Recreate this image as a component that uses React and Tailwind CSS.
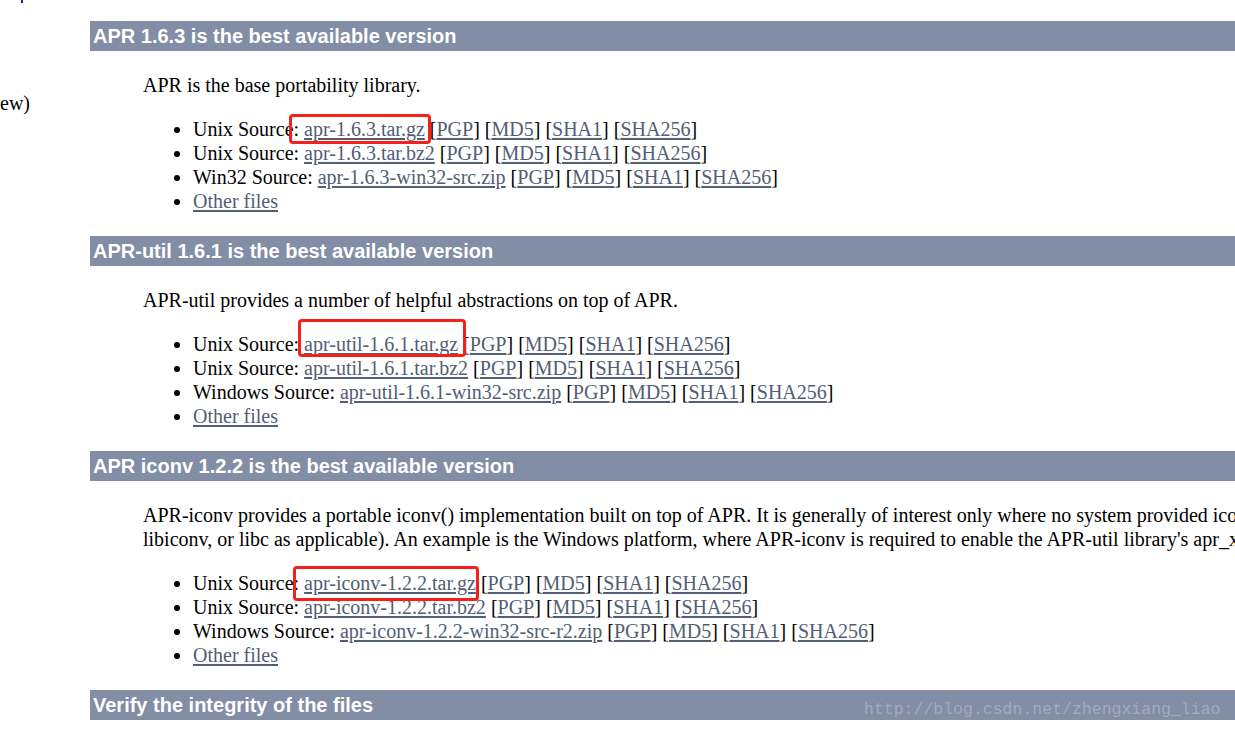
const sections = [
    {
        title: 'APR 1.6.3 is the best available version',
        text: ['APR is the base portability library.'],
        files: [
            ['Unix Source', 'apr-1.6.3.tar.gz'],
            ['Unix Source', 'apr-1.6.3.tar.bz2'],
            ['Win32 Source', 'apr-1.6.3-win32-src.zip'],
        ],
    },
    {
        title: 'APR-util 1.6.1 is the best available version',
        text: ['APR-util provides a number of helpful abstractions on top of APR.'],
        files: [
            ['Unix Source', 'apr-util-1.6.1.tar.gz'],
            ['Unix Source', 'apr-util-1.6.1.tar.bz2'],
            ['Windows Source', 'apr-util-1.6.1-win32-src.zip'],
        ],
    },
    {
        title: 'APR iconv 1.2.2 is the best available version',
        text: [
            'APR-iconv provides a portable iconv() implementation built on top of APR. It is generally of interest only where no system provided iconv implementation is available (APR-util can also build against GNU',
            "libiconv, or libc as applicable). An example is the Windows platform, where APR-iconv is required to enable the APR-util library's apr_xlate (translation) features.",
        ],
        files: [
            ['Unix Source', 'apr-iconv-1.2.2.tar.gz'],
            ['Unix Source', 'apr-iconv-1.2.2.tar.bz2'],
            ['Windows Source', 'apr-iconv-1.2.2-win32-src-r2.zip'],
        ],
    },
];

const Link = ({ children }) => (
    <a href="#" className="text-[#525D76] underline underline-offset-[2px]">
        {children}
    </a>
);

const Heading = ({ children, className = '' }) => (
    <h1
        className={`h-[30px] bg-[#828DA6] pl-[3px] text-[20px] font-bold leading-[30px] text-white ${className}`}
        style={{ fontFamily: '"Liberation Sans", Arial, sans-serif' }}
    >
        {children}
    </h1>
);

const Section = ({ section, first }) => (
    <div className={first ? '' : 'mt-[23px]'}>
        <Heading>{section.title}</Heading>
        <p className="mt-[22px] whitespace-nowrap pl-[53px]">
            {section.text.map((line, i) => (
                <span key={i}>
                    {line}
                    {i < section.text.length - 1 && <br />}
                </span>
            ))}
        </p>
        <ul className="mt-[20px] list-disc whitespace-nowrap pl-[103px]">
            {section.files.map(([label, file]) => (
                <li key={file}>
                    {label}: <Link>{file}</Link> [<Link>PGP</Link>] [<Link>MD5</Link>] [
                    <Link>SHA1</Link>] [<Link>SHA256</Link>]
                </li>
            ))}
            <li>
                <Link>Other files</Link>
            </li>
        </ul>
    </div>
);

const App = () => {
    return (
        <div
            className="relative h-[731px] w-[1235px] overflow-hidden bg-white text-[20px] leading-[24px] text-black"
            style={{ fontFamily: '"Liberation Serif", "Times New Roman", serif' }}
        >
            <div className="flex">
                {/* cut-off left sidebar */}
                <div className="w-[90px] shrink-0">
                    <div className="ml-[21px] h-[3px] w-[2px] bg-[#2020c0]" />
                    <div className="mt-[88px]">ew)</div>
                </div>
                <div className="w-[1500px] shrink-0 pt-[21px]">
                    {sections.map((s, i) => (
                        <Section key={s.title} section={s} first={i === 0} />
                    ))}
                    <Heading className="mt-[23px]">Verify the integrity of the files</Heading>
                </div>
            </div>

            {/* red annotation boxes */}
            <div className="absolute left-[289px] top-[114px] h-[30px] w-[142px] rounded-[4px] border-[3px] border-[#f5201a]" />
            <div className="absolute left-[298px] top-[319px] h-[38px] w-[168px] rounded-[4px] border-[3px] border-[#f5201a]" />
            <div className="absolute left-[293px] top-[566px] h-[35px] w-[186px] rounded-[4px] border-[3px] border-[#f5201a]" />

            {/* watermark */}
            <div
                className="absolute left-[864px] top-[699px] text-[16.5px] leading-[22px] text-[#a3abbd]"
                style={{ fontFamily: '"Liberation Mono", "DejaVu Sans Mono", monospace' }}
            >
                http://blog.csdn.net/zhengxiang_liao
            </div>
        </div>
    );
};

export default App;
